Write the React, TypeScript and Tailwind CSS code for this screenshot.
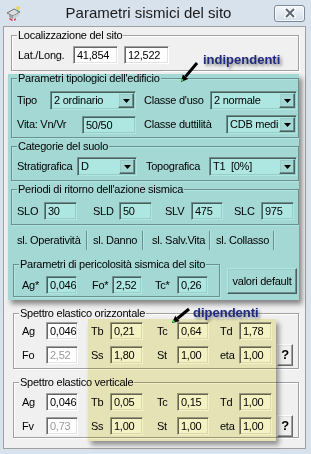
import React from "react";

const sunken =
  "border border-t-[#a0a0a0] border-l-[#a0a0a0] border-r-white border-b-white shadow-[inset_1px_1px_0_#696969,inset_-1px_-1px_0_#e3e3e3]";
const raised =
  "border border-t-white border-l-white border-r-[#696969] border-b-[#696969] shadow-[inset_-1px_-1px_0_#a0a0a0,inset_1px_1px_0_#e3e3e3]";

function Field({ value, className = "", dim = false }: { value: string; className?: string; dim?: boolean }) {
  return (
    <div
      className={`h-[18px] shrink-0 bg-white pl-[3px] leading-[16px] whitespace-nowrap overflow-hidden ${sunken} ${
        dim ? "text-[#9a9a9a]" : ""
      } ${className}`}
    >
      {value}
    </div>
  );
}

function Combo({ value, className = "" }: { value: string; className?: string }) {
  return (
    <div className={`h-[19px] shrink-0 flex bg-white p-[1px] ${sunken} ${className}`}>
      <span className="flex-1 pl-[2px] leading-[15px] overflow-hidden whitespace-pre">{value}</span>
      <span className={`w-[16px] flex items-center justify-center bg-[#f0f0f0] ${raised}`}>
        <svg width="7" height="4" viewBox="0 0 7 4">
          <path d="M0 0h7L3.5 4z" fill="#000" />
        </svg>
      </span>
    </div>
  );
}

function Group({ title, className = "", children }: { title: string; className?: string; children?: React.ReactNode }) {
  return (
    <div className={`relative border border-[#a0a0a0] shadow-[inset_1px_1px_0_#fff,1px_1px_0_#fff] ${className}`}>
      <span className="absolute left-[5px] top-[-8px] px-[1px] bg-[#f0f0f0] leading-[14px] whitespace-nowrap">
        {title}
      </span>
      {children}
    </div>
  );
}

function Lbl({ children, className = "" }: { children: React.ReactNode; className?: string }) {
  return <span className={`shrink-0 whitespace-nowrap ${className}`}>{children}</span>;
}

function Help() {
  return (
    <div className={`ml-[5px] w-[16px] h-[22px] shrink-0 bg-[#f0f0f0] flex items-center justify-center text-[13px] font-bold ${raised}`}>
      ?
    </div>
  );
}

function Tab({ label, className = "" }: { label: string; className?: string }) {
  return (
    <div className={`h-[19px] flex items-center whitespace-nowrap border-r border-r-[#a0a0a0] shadow-[1px_0_0_#fff] ${className}`}>
      {label}
    </div>
  );
}

export default function App() {
  return (
    <div className="relative w-[311px] h-[454px] overflow-hidden bg-[#d8e2ed] font-['Liberation_Sans',Arial,sans-serif] text-[11px] tracking-[-0.25px] text-black flex flex-col">
      {/* title bar */}
      <div className="h-[26px] shrink-0 flex items-center">
        <svg className="ml-[5px]" width="18" height="18" viewBox="0 0 18 18">
          <path d="M2 9 L9 5 L15 8 L8 12 Z" fill="#d9dde2" stroke="#6d7278" strokeWidth="1" />
          <path d="M4 10 L8 12 L8 15 L4 13 Z" fill="#9aa0a6" />
          <path d="M8 12 L14 9 L14 12 L8 15 Z" fill="#c8cdd2" />
          <path d="M5 14 L8 16 L7 17 L4 15 Z" fill="#d83030" />
          <path d="M9 15 L11 14 L11 16 L9 17 Z" fill="#e05050" />
          <path d="M12 2 L15 3 L14 6 L11 5 Z" fill="#e6d84a" />
          <path d="M12 6 L13 6 L13 8 L12 8 Z" fill="#4caf50" />
        </svg>
        <div className="flex-1 text-center text-[15px] tracking-normal leading-[20px] text-[#1a1a1a]">
          Parametri sismici del sito
        </div>
        <div className="mr-[6px] w-[31px] h-[17px] rounded-[3px] border border-[#7b8898] bg-gradient-to-b from-[#f3f6fa] to-[#d5dee8] flex items-center justify-center shadow-[inset_0_0_0_1px_rgba(255,255,255,0.7)]">
          <svg width="12" height="10" viewBox="0 0 12 10">
            <path d="M2 1 L10 9 M10 1 L2 9" stroke="#fff" strokeWidth="4" strokeLinecap="square" />
            <path d="M2 1 L10 9 M10 1 L2 9" stroke="#5e6773" strokeWidth="2" />
          </svg>
        </div>
      </div>

      {/* client area */}
      <div className="ml-[3px] mr-[5px] mb-[5px] flex-1 bg-[#f0f0f0] border border-[#a0a0a0] pl-[7px] pr-[6px]">
        <Group title="Localizzazione del sito" className="mt-[8px] w-[288px] h-[36px]">
          <div className="flex items-center pt-[10px] pl-[6px]">
            <Lbl className="w-[55px]">Lat./Long.</Lbl>
            <Field value="41,854" className="w-[45px]" />
            <Field value="12,522" className="ml-[6px] w-[45px]" />
          </div>
        </Group>

        <Group title="Parametri tipologici dell'edificio" className="mt-[7px] w-[288px] h-[60px]">
          <div className="flex items-center pt-[12px] pl-[5px]">
            <Lbl className="w-[33px]">Tipo</Lbl>
            <Combo value="2 ordinario" className="w-[86px]" />
            <Lbl className="ml-[8px] w-[66px]">Classe d'uso</Lbl>
            <Combo value="2 normale" className="w-[87px]" />
          </div>
          <div className="flex items-center mt-[5px] pl-[5px]">
            <Lbl className="w-[65px]">Vita: Vn/Vr</Lbl>
            <Field value="50/50" className="w-[54px]" />
            <Lbl className="ml-[8px] w-[82px]">Classe duttilità</Lbl>
            <Combo value="CDB medi" className="w-[71px]" />
          </div>
        </Group>

        <Group title="Categorie del suolo" className="mt-[8px] w-[288px] h-[35px]">
          <div className="flex items-center pt-[10px] pl-[5px]">
            <Lbl className="w-[60px]">Stratigrafica</Lbl>
            <Combo value="D" className="w-[60px]" />
            <Lbl className="ml-[9px] w-[63px]">Topografica</Lbl>
            <Combo value="T1  [0%]" className="w-[88px]" />
          </div>
        </Group>

        <Group title="Periodi di ritorno dell'azione sismica" className="mt-[8px] w-[288px] h-[36px]">
          <div className="flex items-center pt-[12px] pl-[5px]">
            <Lbl className="w-[27px]">SLO</Lbl>
            <Field value="30" className="w-[33px]" />
            <Lbl className="ml-[16px] w-[26px]">SLD</Lbl>
            <Field value="50" className="w-[33px]" />
            <Lbl className="ml-[13px] w-[26px]">SLV</Lbl>
            <Field value="475" className="w-[32px]" />
            <Lbl className="ml-[11px] w-[27px]">SLC</Lbl>
            <Field value="975" className="w-[33px]" />
          </div>
        </Group>

        {/* tab strip */}
        <div className="mt-[6px] flex">
          <Tab label="sl. Operatività" className="w-[76px] pl-[6px]" />
          <Tab label="sl. Danno" className="ml-[2px] w-[54px] pl-[4px]" />
          <Tab label="sl. Salv.Vita" className="ml-[2px] w-[65px] pl-[7px]" />
          <Tab label="sl. Collasso" className="ml-[2px] w-[62px] pl-[4px]" />
        </div>

        <div className="mt-[14px] flex items-start">
          <Group title="Parametri di pericolosità sismica del sito" className="ml-[2px] w-[207px] h-[33px]">
            <div className="flex items-center pt-[11px] pl-[8px]">
              <Lbl className="w-[24px]">Ag*</Lbl>
              <Field value="0,046" className="w-[31px]" />
              <Lbl className="ml-[15px] w-[20px]">Fo*</Lbl>
              <Field value="2,52" className="w-[30px]" />
              <Lbl className="ml-[13px] w-[22px]">Tc*</Lbl>
              <Field value="0,26" className="w-[31px]" />
            </div>
          </Group>
          <div className={`ml-[7px] mt-[4px] w-[70px] h-[26px] bg-[#f0f0f0] flex items-center justify-center whitespace-nowrap ${raised}`}>
            valori default
          </div>
        </div>

        <Group title="Spettro elastico orizzontale" className="mt-[16px] ml-[2px] w-[286px] h-[56px]">
          <div className="flex items-center pt-[8px] pl-[8px]">
            <Lbl className="w-[24px]">Ag</Lbl>
            <Field value="0,046" className="w-[32px]" />
            <Lbl className="ml-[13px] w-[19px]">Tb</Lbl>
            <Field value="0,21" className="w-[33px]" />
            <Lbl className="ml-[14px] w-[20px]">Tc</Lbl>
            <Field value="0,64" className="w-[32px]" />
            <Lbl className="ml-[11px] w-[19px]">Td</Lbl>
            <Field value="1,78" className="w-[33px]" />
          </div>
          <div className="flex items-center mt-[4px] pl-[8px]">
            <Lbl className="w-[24px]">Fo</Lbl>
            <Field value="2,52" dim className="w-[32px]" />
            <Lbl className="ml-[13px] w-[19px]">Ss</Lbl>
            <Field value="1,80" className="w-[33px]" />
            <Lbl className="ml-[14px] w-[20px]">St</Lbl>
            <Field value="1,00" className="w-[32px]" />
            <Lbl className="ml-[11px] w-[19px]">eta</Lbl>
            <Field value="1,00" className="w-[33px]" />
            <Help />
          </div>
        </Group>

        <Group title="Spettro elastico verticale" className="mt-[13px] ml-[2px] w-[286px] h-[56px]">
          <div className="flex items-center pt-[10px] pl-[8px]">
            <Lbl className="w-[24px]">Ag</Lbl>
            <Field value="0,046" className="w-[32px]" />
            <Lbl className="ml-[13px] w-[19px]">Tb</Lbl>
            <Field value="0,05" className="w-[33px]" />
            <Lbl className="ml-[14px] w-[20px]">Tc</Lbl>
            <Field value="0,15" className="w-[32px]" />
            <Lbl className="ml-[11px] w-[19px]">Td</Lbl>
            <Field value="1,00" className="w-[33px]" />
          </div>
          <div className="flex items-center mt-[4px] pl-[8px]">
            <Lbl className="w-[24px]">Fv</Lbl>
            <Field value="0,73" dim className="w-[32px]" />
            <Lbl className="ml-[13px] w-[19px]">Ss</Lbl>
            <Field value="1,00" className="w-[33px]" />
            <Lbl className="ml-[14px] w-[20px]">St</Lbl>
            <Field value="1,00" className="w-[32px]" />
            <Lbl className="ml-[11px] w-[19px]">eta</Lbl>
            <Field value="1,00" className="w-[33px]" />
            <Help />
          </div>
        </Group>
      </div>

      {/* highlight overlays */}
      <div className="absolute left-[8px] top-[74px] w-[291px] h-[226px] bg-[#aee6e2] mix-blend-multiply shadow-[3px_4px_5px_rgba(0,0,0,0.45)] pointer-events-none" />
      <div className="absolute left-[88px] top-[319px] w-[188px] h-[122px] bg-[#f4f2c2] mix-blend-multiply shadow-[3px_4px_5px_rgba(0,0,0,0.4)] pointer-events-none" />

      {/* annotations */}
      <div className="absolute left-[203px] top-[50px] text-[13px] font-bold tracking-normal text-[#1d2a7d] [text-shadow:2px_2px_3px_rgba(0,0,0,0.45)]">
        indipendenti
      </div>
      <div className="absolute left-[193px] top-[303px] text-[13px] font-bold tracking-normal text-[#1d2a7d] [text-shadow:2px_2px_3px_rgba(0,0,0,0.45)]">
        dipendenti
      </div>
      <svg className="absolute left-0 top-0 pointer-events-none" width="311" height="454" viewBox="0 0 311 454">
        <line x1="197" y1="63" x2="185.5" y2="76.6" stroke="#000" strokeWidth="3" />
        <polygon points="181,82 188.2,78.9 182.8,74.4" fill="#000" />
        <circle cx="182" cy="80" r="1.3" fill="#3ad04a" />
        <line x1="189" y1="309" x2="177.4" y2="318.5" stroke="#000" strokeWidth="3" />
        <polygon points="172,323 179.6,321.2 175.2,315.8" fill="#000" />
        <circle cx="173.5" cy="321.5" r="1.3" fill="#3ad04a" />
      </svg>
    </div>
  );
}
